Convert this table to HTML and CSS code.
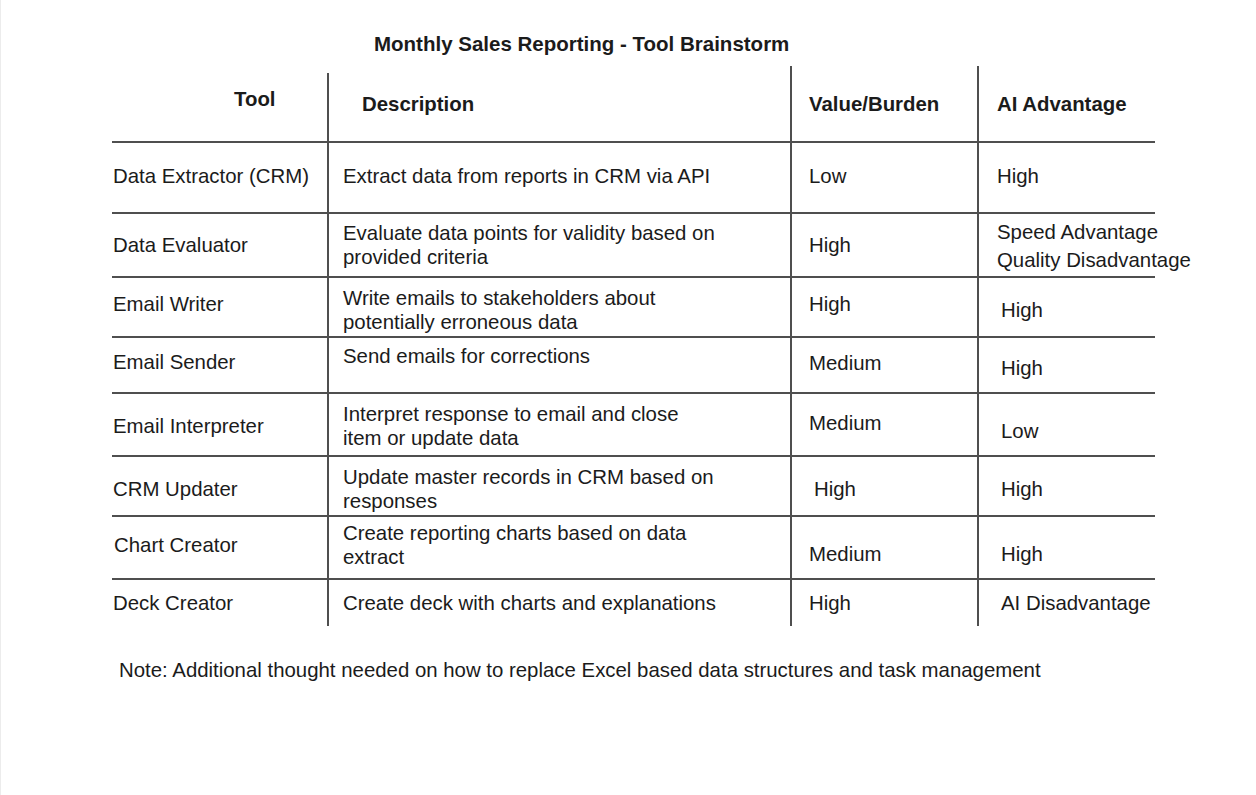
FILE: index.html
```html
<!DOCTYPE html>
<html lang="en">
<head>
<meta charset="utf-8">
<title>Monthly Sales Reporting - Tool Brainstorm</title>
<link rel="stylesheet" href="styles.css">
</head>
<body>
<div class="page">
  <h1 class="title">Monthly Sales Reporting - Tool Brainstorm</h1>
  <div class="grid">
    <div class="cell c1 head tool-head">Tool</div>
    <div class="cell c2 head desc-head">Description</div>
    <div class="cell c3 head">Value/Burden</div>
    <div class="cell c4 head">AI Advantage</div>

    <div class="cell c1 u1">Data Extractor (CRM)</div>
    <div class="cell c2 u1">Extract data from reports in CRM via API</div>
    <div class="cell c3 u1">Low</div>
    <div class="cell c4 u1">High</div>

    <div class="cell c1">Data Evaluator</div>
    <div class="cell c2">Evaluate data points for validity based on<br>provided criteria</div>
    <div class="cell c3">High</div>
    <div class="cell c4 wide d3"><span>Speed Advantage</span><span>Quality Disadvantage</span></div>

    <div class="cell c1 u3">Email Writer</div>
    <div class="cell c2 d3">Write emails to stakeholders about<br>potentially erroneous data</div>
    <div class="cell c3 u3">High</div>
    <div class="cell c4 in d3">High</div>

    <div class="cell c1 u3">Email Sender</div>
    <div class="cell c2 u9">Send emails for corrections</div>
    <div class="cell c3 u2">Medium</div>
    <div class="cell c4 in d3">High</div>

    <div class="cell c1 d1">Email Interpreter</div>
    <div class="cell c2 d1">Interpret response to email and close<br>item or update data</div>
    <div class="cell c3 u1">Medium</div>
    <div class="cell c4 in d6">Low</div>

    <div class="cell c1 d3">CRM Updater</div>
    <div class="cell c2 d3">Update master records in CRM based on<br>responses</div>
    <div class="cell c3 in5 d3">High</div>
    <div class="cell c4 in d3">High</div>

    <div class="cell c1 in1 u2">Chart Creator</div>
    <div class="cell c2 u2">Create reporting charts based on data<br>extract</div>
    <div class="cell c3 d6">Medium</div>
    <div class="cell c4 in d6">High</div>

    <div class="cell c1 last">Deck Creator</div>
    <div class="cell c2 last">Create deck with charts and explanations</div>
    <div class="cell c3 last">High</div>
    <div class="cell c4 in last">AI Disadvantage</div>
  </div>
  <p class="note">Note: Additional thought needed on how to replace Excel based data structures and task management</p>
</div>
</body>
</html>
```

FILE: styles.css
```css
html, body {
  margin: 0;
  padding: 0;
  background: #ffffff;
}

body {
  font-family: "Liberation Sans", Arial, sans-serif;
  color: #1b1b1b;
}

.page {
  width: 1255px;
  height: 795px;
  border-left: 1px solid #ececec;
  box-sizing: border-box;
  overflow: hidden;
}

.title {
  margin: 0;
  padding: 32px 0 0 373px;
  font-size: 20.5px;
  line-height: 24px;
  font-weight: bold;
}

.grid {
  margin: 10px 0 0 111px;
  width: 1043px;
  display: grid;
  grid-template-columns: 217px 463px 187px 176px;
  grid-template-rows: 77px 71px 64px 60px 56px 63px 60px 63px 46px;
}

.cell {
  box-sizing: border-box;
  display: flex;
  flex-direction: column;
  justify-content: center;
  font-size: 20.4px;
  line-height: 24px;
  white-space: nowrap;
  border-bottom: 2px solid #4f4f4f;
}

.c1 { border-right: 2px solid #4f4f4f; padding-left: 1px; }
.c2 { border-right: 2px solid #4f4f4f; padding-left: 14px; }
.c3 { border-right: 2px solid #4f4f4f; padding-left: 17px; }
.c4 { padding-left: 18px; }

.head { font-weight: bold; }
.tool-head {
  margin-top: 7px;
  padding-left: 122px;
  padding-bottom: 16px;
}
.desc-head { padding-left: 33px; }

.wide span:first-child { line-height: 24px; }
.wide span:last-child { line-height: 32px; }

.last {
  border-bottom: none;
}

.in { padding-left: 22px; }
.in1 { padding-left: 2px; }
.in5 { padding-left: 22px; }

.u1 { padding-bottom: 3px; }
.u2 { padding-bottom: 5px; }
.u3 { padding-bottom: 6px; }
.u9 { padding-bottom: 18px; }
.d1 { padding-top: 3px; }
.d3 { padding-top: 6px; }
.d6 { padding-top: 13px; }

.note {
  margin: 32px 0 0 118px;
  font-size: 20.4px;
  line-height: 24px;
}
```
